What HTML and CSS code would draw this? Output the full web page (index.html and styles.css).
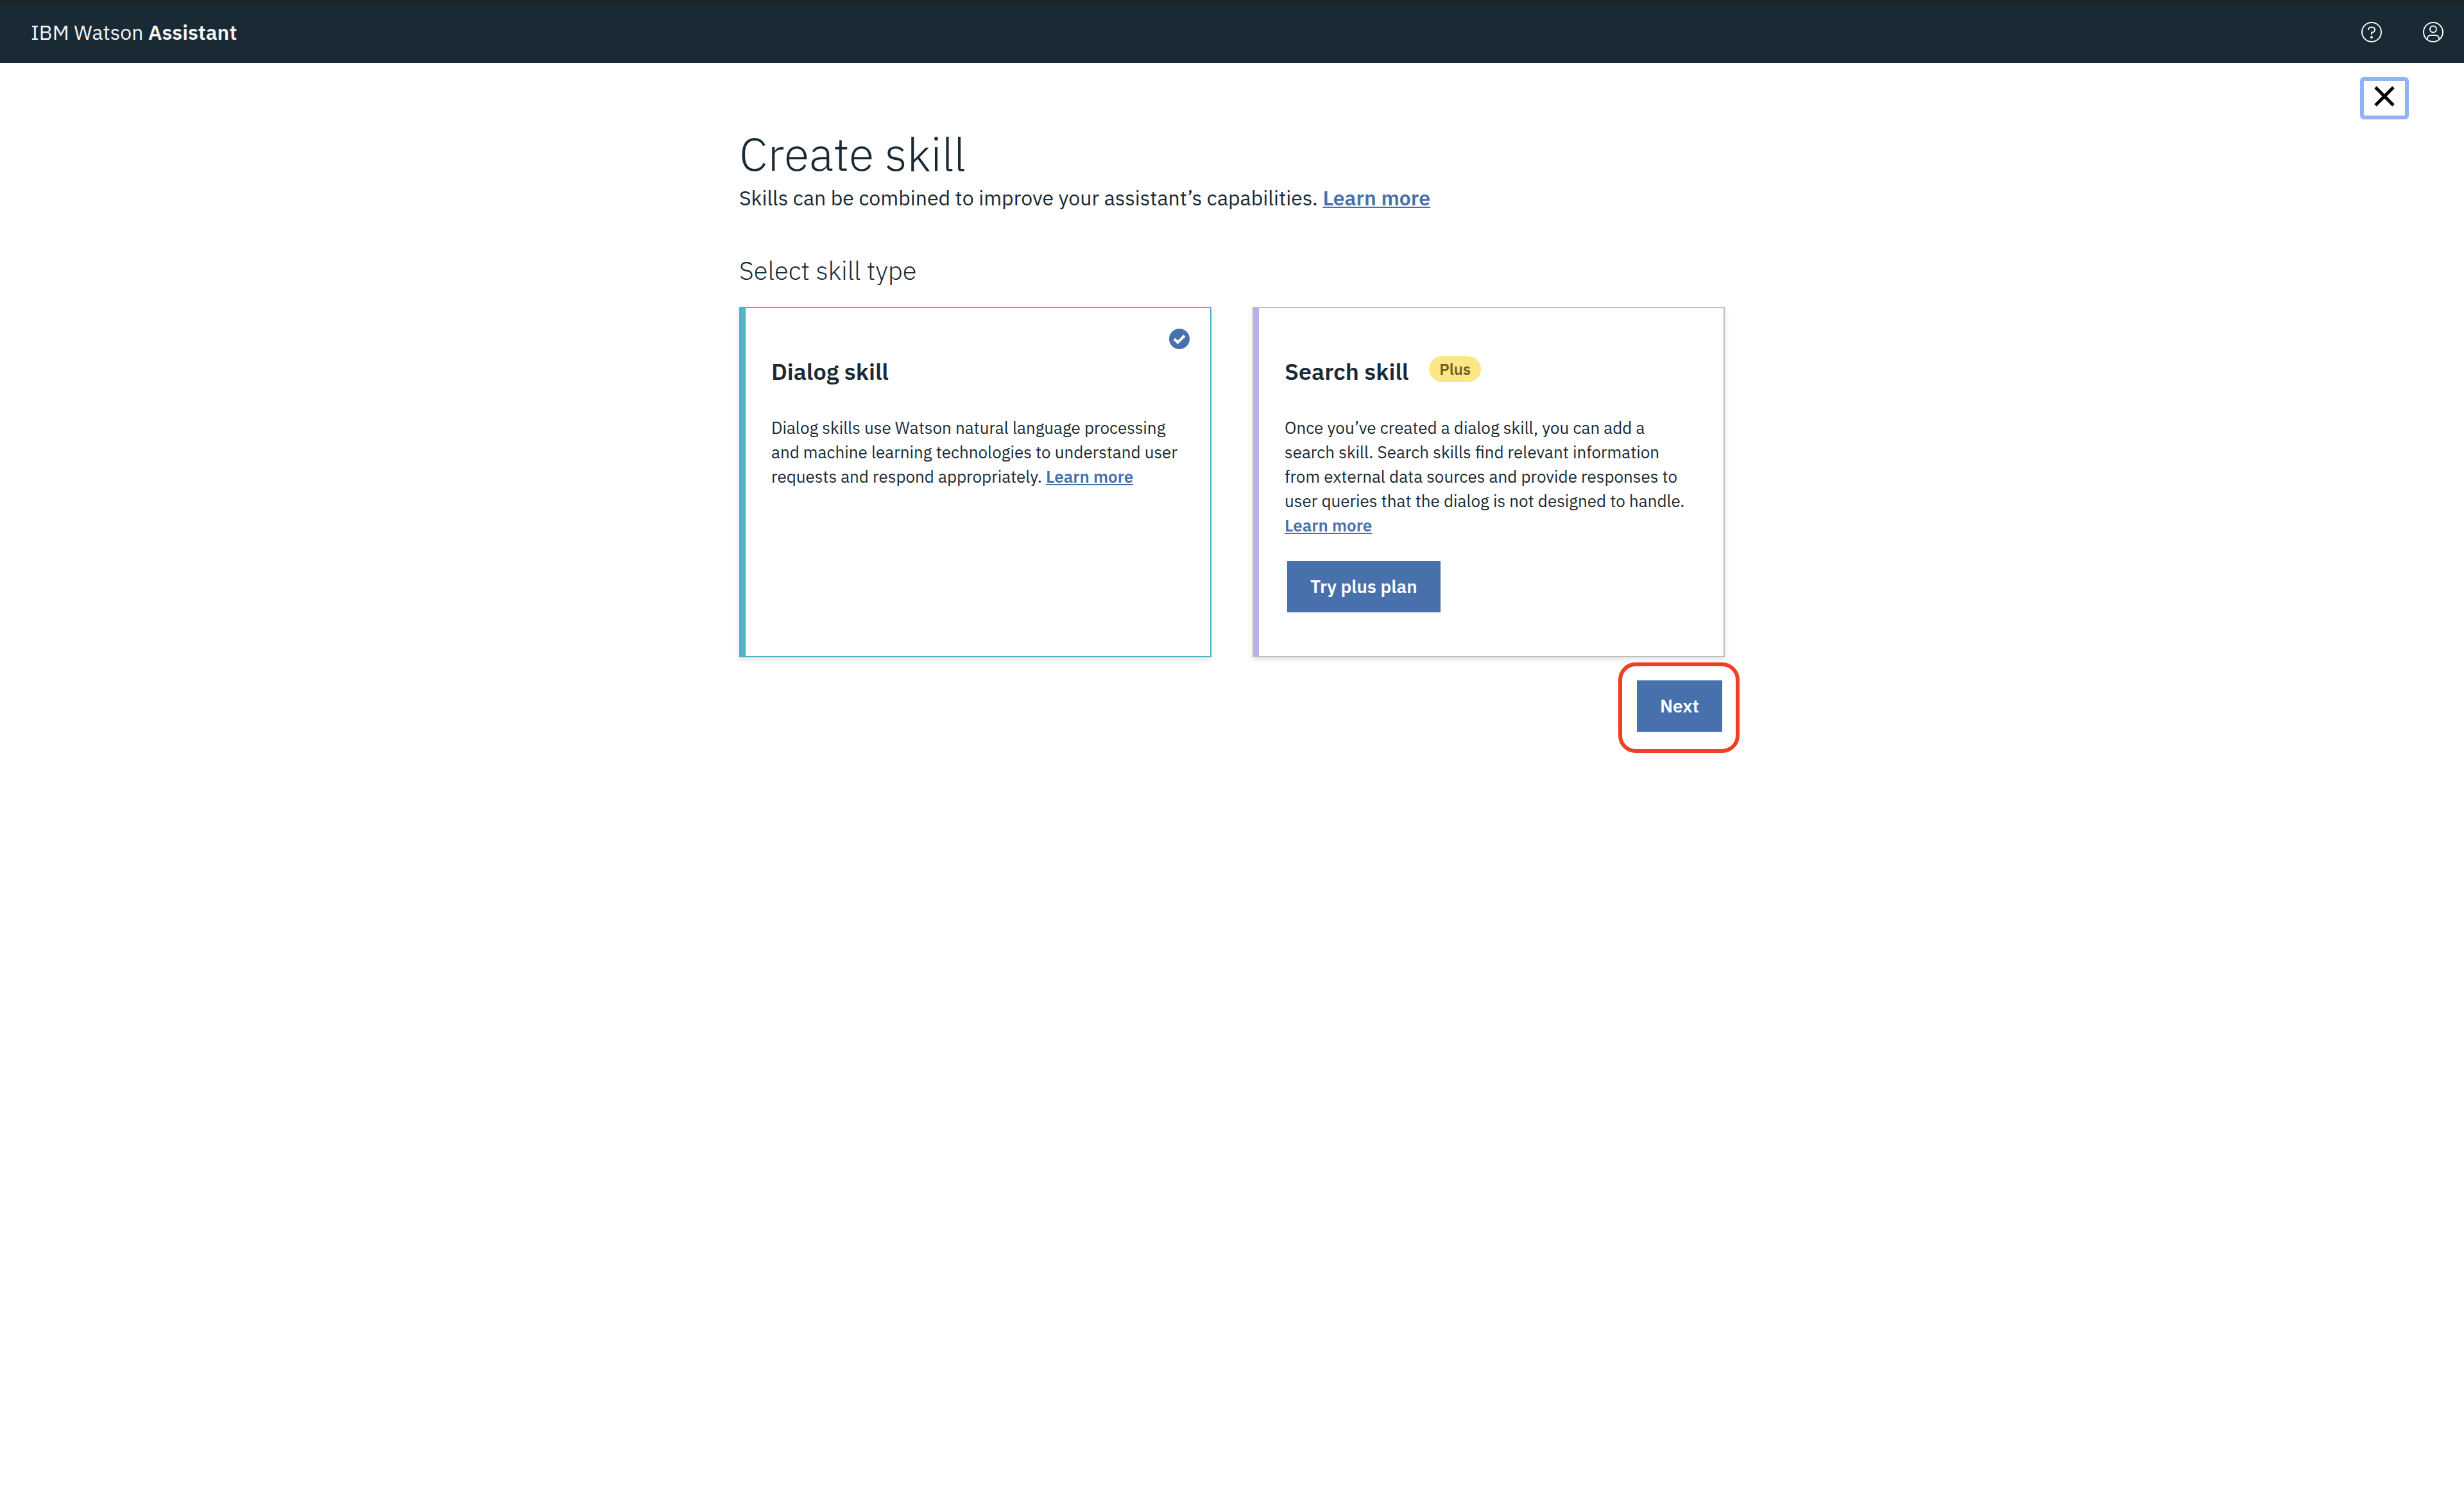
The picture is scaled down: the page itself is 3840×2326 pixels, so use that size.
FILE: index.html
```html
<!DOCTYPE html>
<html lang="en">
<head>
  <meta charset="utf-8">
  <meta name="viewport" content="width=device-width, initial-scale=1">
  <title>IBM Watson Assistant</title>
  <link rel="stylesheet" href="styles.css">
</head>
<body>
  <header class="topbar">
    <a class="brand" href="#">IBM Watson <strong>Assistant</strong></a>
    <nav class="topbar-actions">
      <button class="icon-button" type="button" aria-label="Help">
        <svg class="icon" viewBox="0 0 32 32" fill="none" stroke="currentColor" stroke-width="2">
          <circle cx="16" cy="16" r="15"/>
          <path d="M11 13v-.6A4 4 0 0 1 15 8.400h2a4 4 0 0 1 0 8h-1V20"/>
          <circle cx="16" cy="24" r="2" fill="currentColor" stroke="none"/>
        </svg>
      </button>
      <button class="icon-button" type="button" aria-label="Account">
        <svg class="icon" viewBox="0 0 32 32" fill="none" stroke="currentColor" stroke-width="2">
          <circle cx="16" cy="16" r="15"/>
          <circle cx="16" cy="11.500" r="5"/>
          <path d="M7 27.500V26a5 5 0 0 1 5-5h8a5 5 0 0 1 5 5v1.500"/>
        </svg>
      </button>
    </nav>
  </header>

  <div class="close-row">
    <button class="close-button" type="button" aria-label="Close">
      <svg class="icon" viewBox="0 0 32 32" fill="none" stroke="currentColor" stroke-width="5">
        <path d="M2 2l28 28M30 2L2 30"/>
      </svg>
    </button>
  </div>

  <main class="content">
    <h1 class="page-title">Create skill</h1>
    <p class="intro">Skills can be combined to improve your assistant’s capabilities. <a class="link" href="#">Learn more</a></p>

    <h2 class="section-title">Select skill type</h2>
    <div class="cards">
      <article class="card card-dialog">
        <svg class="icon card-check" viewBox="0 0 32 32" role="img" aria-label="Selected">
          <circle cx="16" cy="16" r="16" fill="#4770ad"/>
          <path d="M8 16l5.500 5.500L24 11" fill="none" stroke="#fff" stroke-width="4"/>
        </svg>
        <div class="card-head">
          <h3 class="card-title">Dialog skill</h3>
        </div>
        <p class="card-text">Dialog skills use Watson natural language processing and machine learning technologies to understand user requests and respond appropriately. <a class="link" href="#">Learn more</a></p>
      </article>

      <article class="card card-search">
        <div class="card-head">
          <h3 class="card-title">Search skill</h3>
          <span class="tag">Plus</span>
        </div>
        <p class="card-text">Once you’ve created a dialog skill, you can add a search skill. Search skills find relevant information from external data sources and provide responses to user queries that the dialog is not designed to handle. <a class="link" href="#">Learn more</a></p>
        <button class="button" type="button">Try plus plan</button>
      </article>
    </div>

    <div class="actions">
      <div class="highlight">
        <button class="button" type="button">Next</button>
      </div>
    </div>
  </main>
</body>
</html>
```
FILE: styles.css
```css
* {
  box-sizing: border-box;
}

body {
  margin: 0;
  background: #fff;
  color: #192a34;
  font-family: "IBM Plex Sans", Roboto, sans-serif;
  font-size: 26px;
  line-height: 38px;
}

h1, h2, h3, p {
  margin: 0;
}

button {
  font: inherit;
  border: 0;
  border-radius: 0;
  cursor: pointer;
}

.icon {
  display: block;
  width: 32px;
  height: 32px;
}

/* Top bar */
.topbar {
  display: flex;
  align-items: center;
  justify-content: space-between;
  height: 98px;
  padding: 0 32px 0 48px;
  border-top: 1px solid #333;
  background: #192a34;
  box-shadow: inset 0 1px #000;
  color: #f3f4f8;
}

.brand {
  color: inherit;
  font-size: 32px;
  line-height: 40px;
  text-decoration: none;
}

.brand strong {
  font-weight: 600;
}

.topbar-actions {
  display: flex;
  gap: 64px;
}

.icon-button {
  padding: 0;
  background: none;
  color: inherit;
}

/* Close */
.close-row {
  display: flex;
  justify-content: flex-end;
  padding: 22px 86px 0;
}

.close-button {
  padding: 8px 16px 14px;
  border: 6px solid #91b3f6;
  border-radius: 6px;
  background: #fff;
  color: #000;
}

/* Page */
.content {
  max-width: 1536px;
  margin: 0 auto;
  padding: 13px 0 64px;
}

.page-title {
  font-size: 72px;
  font-weight: 300;
  line-height: 80px;
}

.intro {
  margin-top: 9px;
  font-size: 32px;
  line-height: 40px;
}

.link {
  color: #4770ad;
  font-weight: 600;
  text-decoration: underline;
  text-decoration-thickness: 2px;
  text-decoration-skip-ink: none;
  text-underline-offset: 2px;
}

.section-title {
  margin-top: 69px;
  font-size: 40px;
  font-weight: 300;
  line-height: 48px;
}

/* Skill cards */
.cards {
  display: grid;
  grid-template-columns: repeat(2, 1fr);
  gap: 64px;
  margin-top: 33px;
}

.card {
  position: relative;
  padding: 75px 40px 68px 48px;
  border: 2px solid;
  box-shadow: 0 4px 8px rgba(0, 0, 0, 0.1);
}

.card::before {
  content: "";
  position: absolute;
  inset: 0 auto 0 0;
  width: 8px;
}

.card-dialog {
  border-color: #50b3c8;
}

.card-dialog::before {
  background: #50b3c8;
}

.card-search {
  border-color: #bebebe;
}

.card-search::before {
  background: #b8b0f3;
}

.card-check {
  position: absolute;
  top: 32px;
  right: 32px;
}

.card-head {
  display: flex;
  align-items: flex-start;
  gap: 32px;
}

.card-title {
  font-size: 36px;
  font-weight: 600;
  line-height: 48px;
}

.tag {
  padding: 0 16px;
  border-radius: 20px;
  background: #fbe785;
  color: #735f1c;
  font-size: 24px;
  font-weight: 600;
  line-height: 40px;
}

.card-text {
  margin-top: 44px;
}

.button {
  padding: 0 36px;
  background: #4770ad;
  color: #fff;
  font-size: 28px;
  font-weight: 600;
  line-height: 80px;
}

.card .button {
  margin: 37px 4px 0;
}

/* Footer actions */
.actions {
  display: flex;
  justify-content: flex-end;
  padding: 36px 4px;
}

.highlight {
  position: relative;
}

.highlight::after {
  content: "";
  position: absolute;
  inset: -28px -27px -33px -29px;
  border: 6px solid #ee4024;
  border-radius: 27px;
  pointer-events: none;
}
```
